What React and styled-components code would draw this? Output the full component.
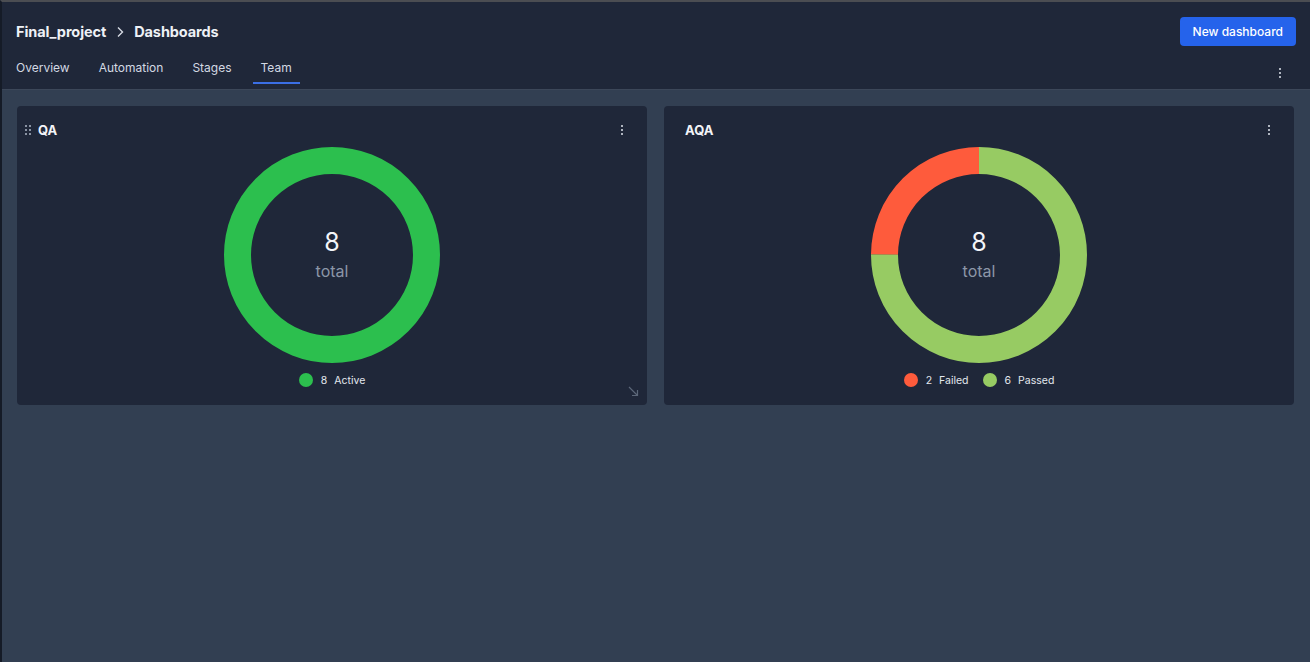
import React from 'react';
import styled, { createGlobalStyle } from 'styled-components';

const GlobalStyle = createGlobalStyle`
  html, body {
    margin: 0;
    padding: 0;
    background: #334155;
  }
  body {
    font-family: Inter, "Noto Sans", "Liberation Sans", sans-serif;
    color: #e5e9f0;
  }
  * {
    box-sizing: border-box;
  }
`;

const Page = styled.div`
  min-height: 662px;
  background: #323f52;
  border-top: 2px solid #4b4d52;
  border-left: 2px solid #151b27;
`;

const Header = styled.header`
  background: #1f2739;
  border-bottom: 1px solid #3c4759;
  padding: 0 14px 0 14px;
  height: 88px;
  display: flex;
  flex-direction: column;
`;

const TopRow = styled.div`
  display: flex;
  align-items: center;
  justify-content: space-between;
  padding-top: 15px;
`;

const Crumbs = styled.div`
  display: flex;
  align-items: center;
  gap: 9px;
  font-size: 14.5px;
  font-weight: 700;
  color: #eef1f6;
  letter-spacing: -0.1px;
`;

const PrimaryButton = styled.button`
  background: #2563eb;
  color: #ffffff;
  border: none;
  border-radius: 4px;
  height: 29px;
  padding: 0 13px;
  font-family: inherit;
  font-size: 12px;
  font-weight: 500;
  cursor: pointer;
`;

const TabRow = styled.div`
  display: flex;
  align-items: flex-end;
  justify-content: space-between;
  margin-top: 8px;
  padding-right: 9px;
`;

const Tabs = styled.nav`
  display: flex;
  gap: 13px;
  margin-left: -8px;
`;

const Tab = styled.div`
  font-size: 12px;
  color: #d3d9e3;
  padding: 6px 8px 7px;
  border-bottom: 2px solid ${({ $active }) => ($active ? '#3b6fe6' : 'transparent')};
  cursor: pointer;
`;

const KebabButton = styled.div`
  display: flex;
  flex-direction: column;
  gap: 2px;
  align-items: center;
  justify-content: center;
  width: 14px;
  padding: 4px 0;
  margin-bottom: ${({ $mb }) => $mb || 0}px;
  cursor: pointer;
  span {
    width: 2px;
    height: 2px;
    border-radius: 1px;
    background: #dfe4ec;
  }
`;

const Board = styled.main`
  display: grid;
  grid-template-columns: 1fr 1fr;
  gap: 17px;
  padding: 16px 16px 16px 15px;
`;

const Card = styled.section`
  position: relative;
  background: #1f2739;
  border-radius: 4px;
  height: 299px;
  display: flex;
  flex-direction: column;
`;

const CardHead = styled.div`
  display: flex;
  align-items: center;
  justify-content: space-between;
  padding: 16px 18px 0 8px;
  height: 32px;
`;

const CardTitle = styled.div`
  display: flex;
  align-items: center;
  gap: 7px;
  font-size: 13px;
  font-weight: 700;
  color: #f2f4f8;
`;

const Handle = styled.div`
  display: grid;
  grid-template-columns: 2px 2px;
  gap: 2px;
  width: 6px;
  visibility: ${({ $show }) => ($show ? 'visible' : 'hidden')};
  span {
    width: 2px;
    height: 2px;
    background: #8a93a3;
  }
`;

const ChartArea = styled.div`
  display: flex;
  justify-content: center;
  margin-top: 9px;
`;

const Donut = styled.div`
  position: relative;
  width: 216px;
  height: 216px;
`;

const Center = styled.div`
  position: absolute;
  inset: 0;
  display: flex;
  flex-direction: column;
  align-items: center;
  justify-content: center;
  padding-bottom: 2px;
`;

const Total = styled.div`
  font-size: 25px;
  line-height: 28px;
  color: #f3f5f9;
  margin-bottom: 5px;
`;

const TotalLabel = styled.div`
  font-size: 16px;
  line-height: 20px;
  color: #8c96a8;
`;

const Legend = styled.div`
  display: flex;
  justify-content: center;
  gap: 14px;
  margin-top: 10px;
`;

const LegendItem = styled.div`
  display: flex;
  align-items: center;
  font-size: 10.5px;
  color: #e3e7ee;
`;

const Dot = styled.span`
  width: 14px;
  height: 14px;
  border-radius: 50%;
  background: ${({ $color }) => $color};
  margin-right: 8px;
`;

const Count = styled.span`
  margin-right: 7px;
`;

const Resize = styled.div`
  position: absolute;
  right: 8px;
  bottom: 8px;
  color: #5b6678;
  display: flex;
`;

const Chevron = () => (
  <svg width="10" height="12" viewBox="0 0 10 12" fill="none">
    <path d="M3 1.5 L7.5 6 L3 10.5" stroke="#d6dbe4" strokeWidth="1.4" />
  </svg>
);

const Kebab = ({ mb }) => (
  <KebabButton $mb={mb}>
    <span />
    <span />
    <span />
  </KebabButton>
);

const R = 94.5;
const C = 2 * Math.PI * R;

const Ring = ({ segments }) => {
  const total = segments.reduce((s, x) => s + x.value, 0);
  let offset = 0;
  return (
    <svg width="216" height="216" viewBox="0 0 216 216">
      <g transform="rotate(-90 108 108)">
        {segments.map((seg) => {
          const len = (seg.value / total) * C;
          const el = (
            <circle
              key={seg.label}
              cx="108"
              cy="108"
              r={R}
              fill="none"
              stroke={seg.color}
              strokeWidth="27"
              strokeDasharray={`${len} ${C - len}`}
              strokeDashoffset={-offset}
            />
          );
          offset += len;
          return el;
        })}
      </g>
    </svg>
  );
};

const WIDGETS = [
  {
    title: 'QA',
    handle: true,
    resize: true,
    segments: [{ label: 'Active', value: 8, color: '#2cbf4e' }],
    legend: [{ label: 'Active', value: 8, color: '#2cbf4e' }],
  },
  {
    title: 'AQA',
    segments: [
      { label: 'Passed', value: 6, color: '#97cb63' },
      { label: 'Failed', value: 2, color: '#fe5b3c' },
    ],
    legend: [
      { label: 'Failed', value: 2, color: '#fe5b3c' },
      { label: 'Passed', value: 6, color: '#97cb63' },
    ],
  },
];

const TABS = ['Overview', 'Automation', 'Stages', 'Team'];

const App = () => {
  return (
    <Page>
      <GlobalStyle />
      <Header>
        <TopRow>
          <Crumbs>
            <span>Final_project</span>
            <Chevron />
            <span>Dashboards</span>
          </Crumbs>
          <PrimaryButton>New dashboard</PrimaryButton>
        </TopRow>
        <TabRow>
          <Tabs>
            {TABS.map((t) => (
              <Tab key={t} $active={t === 'Team'}>
                {t}
              </Tab>
            ))}
          </Tabs>
          <Kebab mb={2} />
        </TabRow>
      </Header>
      <Board>
        {WIDGETS.map((w) => {
          const total = w.segments.reduce((s, x) => s + x.value, 0);
          return (
            <Card key={w.title}>
              <CardHead>
                <CardTitle>
                  <Handle $show={w.handle}>
                    <span />
                    <span />
                    <span />
                    <span />
                    <span />
                    <span />
                  </Handle>
                  {w.title}
                </CardTitle>
                <Kebab />
              </CardHead>
              <ChartArea>
                <Donut>
                  <Ring segments={w.segments} />
                  <Center>
                    <Total>{total}</Total>
                    <TotalLabel>total</TotalLabel>
                  </Center>
                </Donut>
              </ChartArea>
              <Legend>
                {w.legend.map((l) => (
                  <LegendItem key={l.label}>
                    <Dot $color={l.color} />
                    <Count>{l.value}</Count>
                    {l.label}
                  </LegendItem>
                ))}
              </Legend>
              {w.resize && (
                <Resize>
                  <svg width="11" height="11" viewBox="0 0 11 11" fill="none">
                    <path d="M1 1 L9.5 9.5 M4 9.5 H9.5 V4" stroke="currentColor" strokeWidth="1.2" />
                  </svg>
                </Resize>
              )}
            </Card>
          );
        })}
      </Board>
    </Page>
  );
};

export default App;
